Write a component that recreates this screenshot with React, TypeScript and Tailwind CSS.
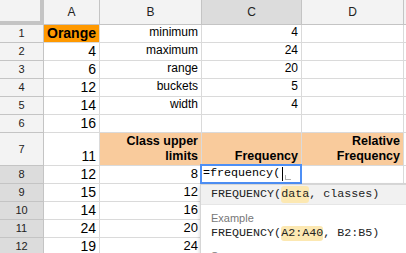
import React from "react";

const cellBase = "border-r border-b border-[#dadada] flex overflow-hidden whitespace-nowrap";
const hdr = "border-r border-b border-[#c4c4c4] bg-[#f3f3f3] flex items-center justify-center text-[11px] text-[#222]";
const hdrSel = "border-r border-b border-[#c4c4c4] bg-[#dcdcdc] flex items-center justify-center text-[11px] text-[#222]";

type Row = {
  n: number;
  sel?: boolean;
  a?: string;
  b?: string;
  c?: string;
  bNum?: boolean;
};

const rows: Row[] = [
  { n: 1, a: "Orange", b: "minimum", c: "4" },
  { n: 2, a: "4", b: "maximum", c: "24" },
  { n: 3, a: "6", b: "range", c: "20" },
  { n: 4, a: "12", b: "buckets", c: "5" },
  { n: 5, a: "14", b: "width", c: "4" },
  { n: 6, a: "16" },
];

const rows2: Row[] = [
  { n: 8, a: "12", b: "8", sel: true },
  { n: 9, a: "15", b: "12", sel: true },
  { n: 10, a: "14", b: "16", sel: true },
  { n: 11, a: "24", b: "20", sel: true },
  { n: 12, a: "19", b: "24", sel: true },
];

function Cell({ children, className = "" }: { children?: React.ReactNode; className?: string }) {
  return <div className={`${cellBase} items-end justify-end pr-[3px] pb-[1px] ${className}`}>{children}</div>;
}

export default function App() {
  return (
    <div
      className="relative w-[406px] h-[253px] overflow-hidden bg-white text-black"
      style={{ fontFamily: '"Liberation Sans", Arial, sans-serif' }}
    >
      <div className="grid grid-cols-[44px_56px_102px_100px_102px_1fr] grid-rows-[25px_18px_18px_18px_18px_18px_18px_33px_18px_18px_18px_18px_18px]">
        {/* header row */}
        <div className="bg-[#f3f3f3] border-r-[4px] border-b-[4px] border-[#c4c4c4]" />
        <div className={hdr + " text-[12px]"}>A</div>
        <div className={hdr + " text-[12px]"}>B</div>
        <div className={hdrSel + " text-[12px]"}>C</div>
        <div className={hdr + " text-[12px]"}>D</div>
        <div className="border-b border-[#c4c4c4] bg-[#f3f3f3]" />

        {rows.map((r) => (
          <React.Fragment key={r.n}>
            <div className={hdr}>{r.n}</div>
            {r.n === 1 ? (
              <div className={`${cellBase} items-center pl-[3px] bg-[#ff9900] font-bold text-[14px]`}>{r.a}</div>
            ) : (
              <Cell className="text-[14px] leading-[16px]">{r.a}</Cell>
            )}
            <Cell className="text-[12px] leading-[15px] pb-[2px]">{r.b}</Cell>
            <Cell className="text-[12px] leading-[15px] pb-[2px]">{r.c}</Cell>
            <Cell />
            <div className="border-b border-[#dadada]" />
          </React.Fragment>
        ))}

        {/* row 7 */}
        <div className={hdr}>7</div>
        <Cell className="text-[14px] leading-[16px]">11</Cell>
        <div className={`${cellBase} bg-[#f9cb9c] flex-col items-end justify-end pr-[3px] pb-[1px] font-bold text-[12.5px] leading-[15px] text-right`}>
          <span>Class upper</span>
          <span>limits</span>
        </div>
        <div className={`${cellBase} bg-[#f9cb9c] flex-col items-end justify-end pr-[3px] pb-[1px] font-bold text-[12.5px] leading-[15px] text-right`}>
          <span>Frequency</span>
        </div>
        <div className={`${cellBase} bg-[#f9cb9c] flex-col items-end justify-end pr-[3px] pb-[1px] font-bold text-[12.5px] leading-[15px] text-right`}>
          <span>Relative</span>
          <span>Frequency</span>
        </div>
        <div className="border-b border-[#dadada]" />

        {rows2.map((r) => (
          <React.Fragment key={r.n}>
            <div className={hdrSel}>{r.n}</div>
            <Cell className="text-[14px] leading-[16px]">{r.a}</Cell>
            <Cell className="text-[13px] leading-[16px]">{r.b}</Cell>
            <Cell />
            <Cell />
            <div className="border-b border-[#dadada]" />
          </React.Fragment>
        ))}
      </div>

      {/* in-cell editor */}
      <div
        className="absolute left-[200px] top-[164px] w-[102px] h-[20px] border-2 border-[#4d8ff5] bg-white flex items-center pl-[1px] text-[11.7px] text-black"
        style={{ fontFamily: '"Liberation Mono", "DejaVu Sans Mono", monospace' }}
      >
        <span>=frequency(</span>
        <span className="ml-[2px] w-px h-[14px] bg-black" />
        <span className="ml-[2px] mt-[6px] w-[6px] h-[5px] border-l border-b border-[#b0b0b0]" />
      </div>

      {/* function help popup */}
      <div
        className="absolute left-[200px] top-[184px] w-[230px] h-[90px] bg-white border border-[#d6d6d6] shadow-[0_2px_4px_rgba(0,0,0,0.2)] text-[11.7px] text-[#222]"
        style={{ fontFamily: '"Liberation Mono", "DejaVu Sans Mono", monospace' }}
      >
        <div className="h-[20px] bg-[#f1f1f1] flex items-center pl-[10px] border-b border-[#e6e6e6]">
          <span>FREQUENCY(</span>
          <span className="bg-[#fce8b2] rounded-[3px]">data</span>
          <span>, classes)</span>
        </div>
        <div className="pl-[10px] pt-[7px]">
          <div
            className="text-[11px] leading-[12px] text-[#777]"
            style={{ fontFamily: '"Liberation Sans", Arial, sans-serif' }}
          >
            Example
          </div>
          <div className="mt-[2px] leading-[15px] flex">
            <span>FREQUENCY(</span>
            <span className="bg-[#fce8b2] rounded-[3px]">A2:A40</span>
            <span>, B2:B5)</span>
          </div>
          <div
            className="mt-[9px] text-[11px] leading-[12px] text-[#777]"
            style={{ fontFamily: '"Liberation Sans", Arial, sans-serif' }}
          >
            Summary
          </div>
        </div>
      </div>
    </div>
  );
}
